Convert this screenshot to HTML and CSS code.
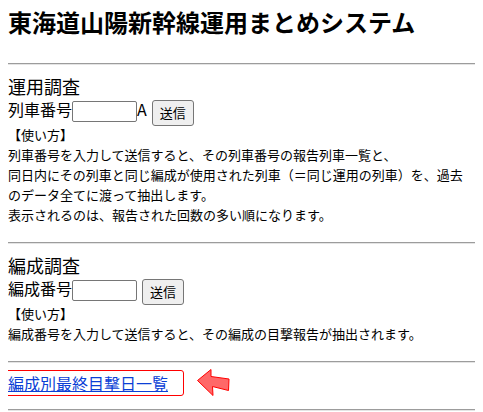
FILE: index.html
```html
<!DOCTYPE html>
<html lang="ja">
<head>
    <meta charset="utf-8">
    <title>東海道山陽新幹線運用まとめシステム</title>
    <link rel="stylesheet" href="styles.css">
</head>
<body>
    <h1 class="site-title">東海道山陽新幹線運用まとめシステム</h1>
    <hr class="sep">

    <div class="section">
        <h2 class="section-title">運用調査</h2>
        <form class="search-row">
            <span class="field-label">列車番号</span>
            <input type="text" class="num-input">
            <span class="field-label">A</span>
            <button type="submit" class="send-btn">送信</button>
        </form>
        <p class="howto">
            【使い方】<br>
            列車番号を入力して送信すると、その列車番号の報告列車一覧と、<br>
            同日内にその列車と同じ編成が使用された列車（＝同じ運用の列車）を、過去のデータ全てに渡って抽出します。<br>
            表示されるのは、報告された回数の多い順になります。
        </p>
    </div>
    <hr class="sep">

    <div class="section">
        <h2 class="section-title">編成調査</h2>
        <form class="search-row">
            <span class="field-label">編成番号</span>
            <input type="text" class="num-input">
            <button type="submit" class="send-btn">送信</button>
        </form>
        <p class="howto">
            【使い方】<br>
            編成番号を入力して送信すると、その編成の目撃報告が抽出されます。
        </p>
    </div>
    <hr class="sep">

    <div class="link-row">
        <div class="link-box">
            <a href="#">編成別最終目撃日一覧</a>
        </div>
        <svg class="arrow" width="36" height="32" viewBox="0 0 36 32">
            <path d="M2.5 13.5 L16 2.5 L16 9.5 L34 12 L33.5 23.5 L17.5 19.5 L18 28.5 Z"
                  fill="#ff6868" stroke="#ff0000" stroke-width="1" stroke-linejoin="round"/>
        </svg>
    </div>
    <hr class="sep sep-last">
</body>
</html>
```

FILE: styles.css
```css
body {
    font-family: "Noto Sans CJK JP", "Noto Sans", sans-serif;
    margin: 8px;
    color: #000;
    background: #fff;
}
.site-title {
    font-size: 24px;
    line-height: 28px;
    font-weight: bold;
    margin: 0 0 27px;
}
.sep {
    margin: 0;
    border: none;
    border-top: 1px solid #9c9c9c;
    border-bottom: 1px solid #e4e4e4;
    height: 0;
}
.section {
    padding: 10px 0 17px;
}
.section-title {
    font-size: 18px;
    line-height: 22px;
    font-weight: normal;
    margin: 0;
}
.search-row {
    display: flex;
    align-items: flex-start;
    margin: 3px 0 0;
}
.field-label {
    font-size: 16px;
    line-height: 18px;
}
.num-input {
    box-sizing: border-box;
    width: 65px;
    height: 21px;
    margin: 1px 0 0;
    padding: 1px 2px;
    border: 1px solid #767676;
    border-radius: 2px;
    font-size: 13px;
}
.send-btn {
    box-sizing: border-box;
    height: 26px;
    margin: 0 0 0 5px;
    padding: 0 7px;
    font-family: inherit;
    font-size: 13px;
    line-height: 24px;
    color: #000;
    background: #efefef;
    border: 1px solid #767676;
    border-radius: 3px;
}
.howto {
    margin: -1px 0 0;
    font-size: 13px;
    line-height: 20px;
}
.link-row {
    display: flex;
    align-items: center;
    margin: 4px 0 10px;
}
.link-box {
    margin-left: -5px;
    padding: 0 15px 0 4px;
    border: 1px solid #ff0000;
    border-radius: 3px;
    font-size: 16px;
    line-height: 24px;
}
.link-box a {
    color: #0b3fd6;
}
.arrow {
    display: block;
    margin-left: 11px;
}
```
